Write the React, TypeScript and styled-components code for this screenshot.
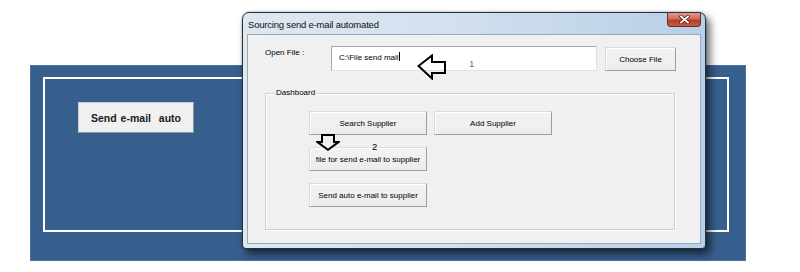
import React from 'react';
import styled, { createGlobalStyle } from 'styled-components';

const GlobalStyle = createGlobalStyle`
  html, body {
    margin: 0;
    padding: 0;
    background: #fff;
  }
  body {
    font-family: "Liberation Sans", Arial, sans-serif;
  }
`;

const Page = styled.div`
  position: relative;
  width: 800px;
  height: 272px;
  padding: 65px 0 0 30px;
  box-sizing: border-box;
  overflow: hidden;
`;

// the worksheet's blue shape with its white frame
const SheetPanel = styled.div`
  width: 716px;
  height: 196px;
  box-sizing: border-box;
  padding: 11px 16px 28px 12px;
  background: #375f8e;
  border: 1px solid #4d72a0;
`;

const InnerFrame = styled.div`
  height: 100%;
  box-sizing: border-box;
  border: 2px solid #fff;
  padding: 23px 0 0 33px;
`;

const SheetButton = styled.button`
  width: 116px;
  height: 31px;
  padding: 0;
  background: #f0f0f0;
  border: 1px solid;
  border-color: #c9ccd0 #8f959c #8f959c #c9ccd0;
  font-family: "Liberation Sans", Arial, sans-serif;
  font-weight: bold;
  font-size: 10.5px;
  color: #1a1a1a;
  word-spacing: 1px;
`;

// floating window over the sheet
const Dialog = styled.div`
  position: absolute;
  left: 242px;
  top: 12px;
  width: 464px;
  height: 237px;
  box-sizing: border-box;
  display: flex;
  flex-direction: column;
  padding: 0 4px 4px 4px;
  border: 1px solid #27323f;
  border-radius: 7px 7px 4px 4px;
  background: linear-gradient(90deg, #dfe7f1 0%, #d3e0ee 45%, #b7cfe8 100%);
  box-shadow: 4px 5px 9px rgba(0, 0, 0, 0.6), 0 0 2px rgba(0, 0, 0, 0.4);
`;

const TitleBar = styled.div`
  height: 21px;
  flex: none;
  display: flex;
  justify-content: space-between;
  align-items: flex-start;
`;

const Title = styled.span`
  margin: 6px 0 0 1px;
  font-size: 9.5px;
  letter-spacing: -0.2px;
  color: #111;
`;

const CloseButton = styled.div`
  width: 34px;
  height: 14px;
  box-sizing: border-box;
  display: flex;
  align-items: center;
  justify-content: center;
  border: 1px solid #6b2a22;
  border-top: none;
  border-radius: 0 0 4px 4px;
  background: linear-gradient(180deg, #e19a8c 0%, #cf6b58 45%, #b93f27 55%, #c75a3f 100%);
`;

const Client = styled.div`
  flex: 1;
  position: relative;
  background: #f0f0f0;
  border: 1px solid #98a9bc;
  padding: 11px 0 0 17px;
  font-size: 8px;
  color: #000;
`;

const FileRow = styled.div`
  display: flex;
  align-items: flex-start;
`;

const FieldLabel = styled.span`
  width: 66px;
  padding-top: 2px;
`;

const TextBox = styled.div`
  position: relative;
  width: 266px;
  height: 25px;
  box-sizing: border-box;
  padding: 5px 0 0 7px;
  background: #fff;
  border: 1px solid;
  border-color: #a5a5a5 #e2e2e2 #e2e2e2 #a5a5a5;
`;

const Caret = styled.span`
  display: inline-block;
  width: 0;
  height: 9px;
  vertical-align: -1px;
  border-left: 1px solid #000;
`;

const Button = styled.button<{ $w: number }>`
  width: ${({ $w }) => $w}px;
  height: 24px;
  padding: 0;
  box-sizing: border-box;
  background: linear-gradient(180deg, #f3f3f3, #ececec);
  border: 1px solid;
  border-color: #dcdcdc #9d9d9d #9d9d9d #dcdcdc;
  box-shadow: inset 1px 1px 0 #fff;
  font-family: "Liberation Sans", Arial, sans-serif;
  font-size: 8px;
  color: #000;
  white-space: nowrap;
  overflow: visible;
`;

const ChooseButton = styled(Button)`
  margin: 1px 0 0 8px;
`;

const Group = styled.div`
  position: relative;
  width: 410px;
  height: 137px;
  box-sizing: border-box;
  margin-top: 22px;
  padding: 17px 0 0 43px;
  border: 1px solid #cfcfcf;
  box-shadow: inset 1px 1px 0 #fff, 1px 1px 0 #fff;
  display: flex;
  flex-direction: column;
  gap: 12px;
`;

const Legend = styled.span`
  position: absolute;
  left: 8px;
  top: -6px;
  padding: 0 2px;
  background: #f0f0f0;
  line-height: 10px;
`;

const ButtonRow = styled.div`
  display: flex;
  gap: 7px;
`;

// hand-drawn annotations over the form
const Marker = styled.div<{ $x: number; $y: number }>`
  position: absolute;
  left: ${({ $x }) => $x}px;
  top: ${({ $y }) => $y}px;
  display: flex;
  align-items: flex-start;
  line-height: 10px;
  pointer-events: none;
`;

const StepNumber = styled.span<{ $blue?: boolean; $dx: number; $dy: number }>`
  margin: ${({ $dy, $dx }) => `${$dy}px 0 0 ${$dx}px`};
  font-size: 9.5px;
  color: ${({ $blue }) => ($blue ? '#3d7cc4' : '#000')};
`;

export default function App() {
  return (
    <Page>
      <GlobalStyle />
      <SheetPanel>
        <InnerFrame>
          <SheetButton>Send e-mail&nbsp; auto</SheetButton>
        </InnerFrame>
      </SheetPanel>

      <Dialog>
        <TitleBar>
          <Title>Sourcing send e-mail automated</Title>
          <CloseButton>
            <svg width="11" height="9" viewBox="0 0 11 9">
              <path d="M2 1.5 L9 7.5 M9 1.5 L2 7.5" stroke="#5a2018" strokeWidth="3.4" strokeLinecap="square" />
              <path d="M2 1.5 L9 7.5 M9 1.5 L2 7.5" stroke="#fff" strokeWidth="1.8" strokeLinecap="square" />
            </svg>
          </CloseButton>
        </TitleBar>
        <Client>
          <FileRow>
            <FieldLabel>Open File :</FieldLabel>
            <TextBox>
              C:\File send mail<Caret />
              <Marker $x={85} $y={7}>
                <svg width="30" height="26" viewBox="0 0 30 26">
                  <path d="M1.5 12 L15 1.5 L15 8 L28 8 L28 19 L15 19 L15 24.5 Z" fill="none" stroke="#000" strokeWidth="2" strokeLinejoin="miter" />
                </svg>
                <StepNumber $blue $dx={22} $dy={5}>1</StepNumber>
              </Marker>
            </TextBox>
            <ChooseButton $w={71}>Choose File</ChooseButton>
          </FileRow>

          <Group>
            <Legend>Dashboard</Legend>
            <ButtonRow>
              <Button $w={118}>Search Supplier</Button>
              <Button $w={118}>Add Supplier</Button>
            </ButtonRow>
            <ButtonRow>
              <Button $w={118}>file for send e-mail to supplier</Button>
            </ButtonRow>
            <ButtonRow>
              <Button $w={118}>Send auto e-mail to supplier</Button>
            </ButtonRow>
            <Marker $x={50} $y={40}>
              <svg width="24" height="17" viewBox="0 0 24 17">
                <path d="M6 1 L18 1 L18 8 L22.5 8 L12 15.8 L1.5 8 L6 8 Z" fill="#f0f0f0" stroke="#000" strokeWidth="2" />
              </svg>
              <StepNumber $dx={32} $dy={8}>2</StepNumber>
            </Marker>
          </Group>
        </Client>
      </Dialog>
    </Page>
  );
}
